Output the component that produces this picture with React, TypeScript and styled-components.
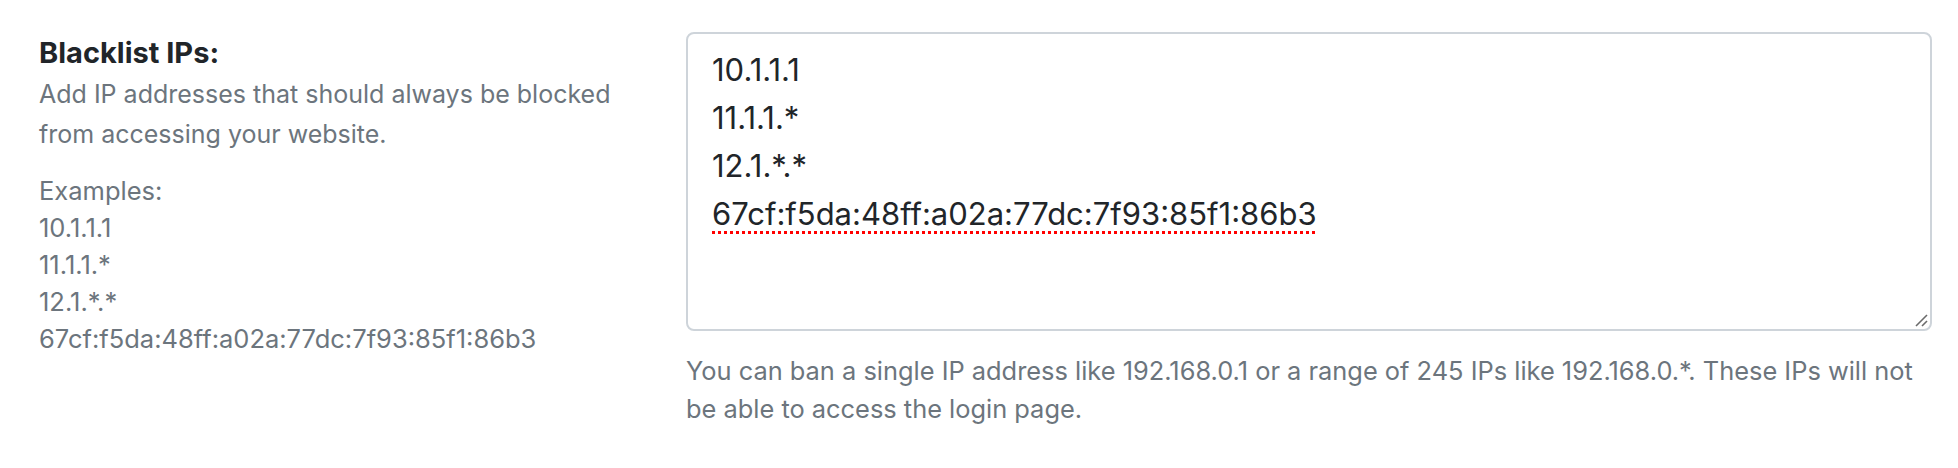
import React, { FC } from 'react';
import styled, { createGlobalStyle } from 'styled-components';

const GlobalStyle = createGlobalStyle`
  html, body {
    margin: 0;
    padding: 0;
    background: #fff;
  }
  body {
    font-family: Inter, "Noto Sans", "Liberation Sans", sans-serif;
    color: #212529;
  }
`;

const Row = styled.div`
  display: flex;
  align-items: flex-start;
  padding: 32px 26px 0 39px;
  box-sizing: border-box;
  width: 1958px;
`;

const LabelColumn = styled.div`
  width: 647px;
  flex-shrink: 0;
  padding-right: 30px;
  box-sizing: border-box;
`;

const Heading = styled.div`
  margin: 2px 0 2px;
  font-size: 29px;
  line-height: 38px;
  font-weight: 700;
  color: #212529;
`;

const Description = styled.div`
  font-size: 25px;
  line-height: 40px;
  color: #6c757d;
`;

const Examples = styled.div`
  margin-top: 18px;
  font-size: 25.5px;
  line-height: 37px;
  color: #6c757d;
`;

const FieldColumn = styled.div`
  flex: 1;
  min-width: 0;
`;

const TextBox = styled.div`
  position: relative;
  box-sizing: border-box;
  height: 299px;
  border: 2px solid #ced4da;
  border-radius: 8px;
  padding: 12px 24px;
  font-size: 31px;
  line-height: 48px;
  color: #212529;
  background: #fff;
`;

const Misspelled = styled.span`
  text-decoration: underline dotted #ff0000;
  text-decoration-thickness: 3px;
  text-underline-offset: 6px;
`;

const Grip = styled.svg`
  position: absolute;
  right: 2px;
  bottom: 2px;
`;

const HelpText = styled.div`
  margin-top: 21px;
  font-size: 25.4px;
  line-height: 38px;
  color: #6c757d;
`;

const ipLines = ['10.1.1.1', '11.1.1.*', '12.1.*.*'];
const ipv6 = '67cf:f5da:48ff:a02a:77dc:7f93:85f1:86b3';

const App: FC = () => (
  <>
    <GlobalStyle />
    <Row>
      <LabelColumn>
        <Heading>Blacklist IPs:</Heading>
        <Description>
          Add IP addresses that should always be blocked from accessing your website.
        </Description>
        <Examples>
          <div>Examples:</div>
          {[...ipLines, ipv6].map((line) => (
            <div key={line}>{line}</div>
          ))}
        </Examples>
      </LabelColumn>

      <FieldColumn>
        <TextBox role="textbox" aria-multiline="true">
          {ipLines.map((line) => (
            <div key={line}>{line}</div>
          ))}
          <div>
            <Misspelled>{ipv6}</Misspelled>
          </div>
          <Grip width="14" height="14" viewBox="0 0 14 14">
            <line x1="13" y1="2" x2="2" y2="13" stroke="#6b6b6b" strokeWidth="1.6" />
            <line x1="13" y1="8" x2="8" y2="13" stroke="#6b6b6b" strokeWidth="1.6" />
          </Grip>
        </TextBox>
        <HelpText>
          You can ban a single IP address like 192.168.0.1 or a range of 245 IPs like 192.168.0.*. These IPs will not be able to access the login page.
        </HelpText>
      </FieldColumn>
    </Row>
  </>
);

export default App;
